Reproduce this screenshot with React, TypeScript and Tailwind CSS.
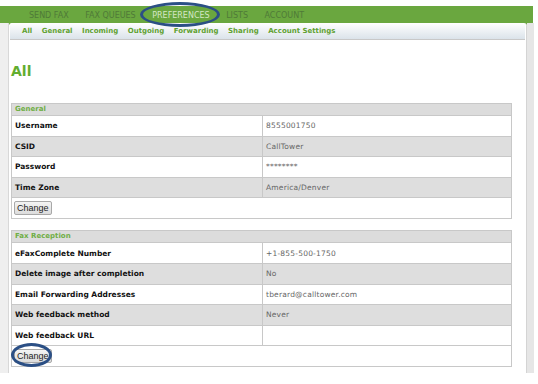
import React from 'react';

const navItems = ['SEND FAX', 'FAX QUEUES', 'PREFERENCES', 'LISTS', 'ACCOUNT'];
const subItems = ['All', 'General', 'Incoming', 'Outgoing', 'Forwarding', 'Sharing', 'Account Settings'];

const general: [string, string][] = [
    ['Username', '8555001750'],
    ['CSID', 'CallTower'],
    ['Password', '********'],
    ['Time Zone', 'America/Denver'],
];

const faxReception: [string, string][] = [
    ['eFaxComplete Number', '+1-855-500-1750'],
    ['Delete image after completion', 'No'],
    ['Email Forwarding Addresses', 'tberard@calltower.com'],
    ['Web feedback method', 'Never'],
    ['Web feedback URL', ''],
];

const ChangeButton: React.FC = () => (
    <button className="h-[14px] px-[2px] border border-[#a8a8a8] rounded-[2px] bg-gradient-to-b from-[#f4f4f4] to-[#dcdcdc] text-[9px] leading-none text-[#222] font-['Liberation_Sans',Arial,sans-serif]">
        Change
    </button>
);

const PrefTable: React.FC<{ title: string; rows: [string, string][] }> = ({ title, rows }) => (
    <div className="mx-[2px] w-[501px] border border-[#c8c8c8]">
        <div className="h-[12px] bg-[#dcdcdc] border-b border-[#c8c8c8] pl-[3px] text-[7px] leading-[11px] font-bold text-[#6fae45]">
            {title}
        </div>
        {rows.map(([label, value], i) => (
            <div
                key={label}
                className={`flex h-[20.6px] border-b border-[#c8c8c8] ${i % 2 === 1 ? 'bg-[#dedede]' : 'bg-white'}`}
            >
                <div className="w-[251px] border-r border-[#c8c8c8] pl-[3px] flex items-center text-[7.5px] font-bold text-[#111]">
                    {label}
                </div>
                <div className="flex-1 pl-[3px] flex items-center text-[7.5px] tracking-[0.2px] text-[#666]">{value}</div>
            </div>
        ))}
        <div className="h-[20px] flex items-center pl-[2px] bg-white">
            <ChangeButton />
        </div>
    </div>
);

const App: React.FC = () => {
    return (
        <div className="relative w-[538px] h-[384px] bg-white overflow-hidden font-['DejaVu_Sans',Verdana,sans-serif]">
            {/* top nav */}
            <div className="mt-[6px] w-[533px] h-[19px] bg-[#6aa73f] flex items-start pl-[29px] gap-[16.5px] pt-[5px]">
                {navItems.map((item) => (
                    <span
                        key={item}
                        className={`text-[8px] leading-[9px] ${item === 'PREFERENCES' ? 'text-[#d4e6c4]' : 'text-[#4f7a38]'}`}
                    >
                        {item}
                    </span>
                ))}
            </div>

            {/* body */}
            <div className="-mt-[2px] flex w-[534px] h-[350px]">
                <div className="w-[9px] bg-[#efefef] border-r border-[#d8d8d8]" />
                <div className="flex-1 bg-white rounded-t-[3px] border-r border-[#d4d4d4]">
                    <div className="h-[17px] mx-[1px] rounded-t-[3px] bg-gradient-to-b from-white to-[#dbe3ea] border-b border-[#c8c8c8] flex items-center pl-[12px] gap-[9.5px]">
                        {subItems.map((item) => (
                            <span key={item} className="text-[7px] font-bold text-[#5fa131]">
                                {item}
                            </span>
                        ))}
                    </div>

                    <h1 className="mt-[23px] ml-[2px] text-[14px] leading-[16px] font-bold text-[#62ad2f]">All</h1>

                    <div className="mt-[24px]">
                        <PrefTable title="General" rows={general} />
                    </div>
                    <div className="mt-[11px]">
                        <PrefTable title="Fax Reception" rows={faxReception} />
                    </div>
                </div>
                <div className="w-[7px] bg-[#e6e6e6]" />
            </div>

            {/* highlight ellipses */}
            <div className="absolute left-[140px] top-[2px] w-[80px] h-[25px] rounded-[50%] border-[3px] border-[#2b4f85]" />
            <div className="absolute left-[11px] top-[343px] w-[41px] h-[24px] rounded-[50%] border-[3px] border-[#2b4f85]" />
        </div>
    );
};

export default App;
